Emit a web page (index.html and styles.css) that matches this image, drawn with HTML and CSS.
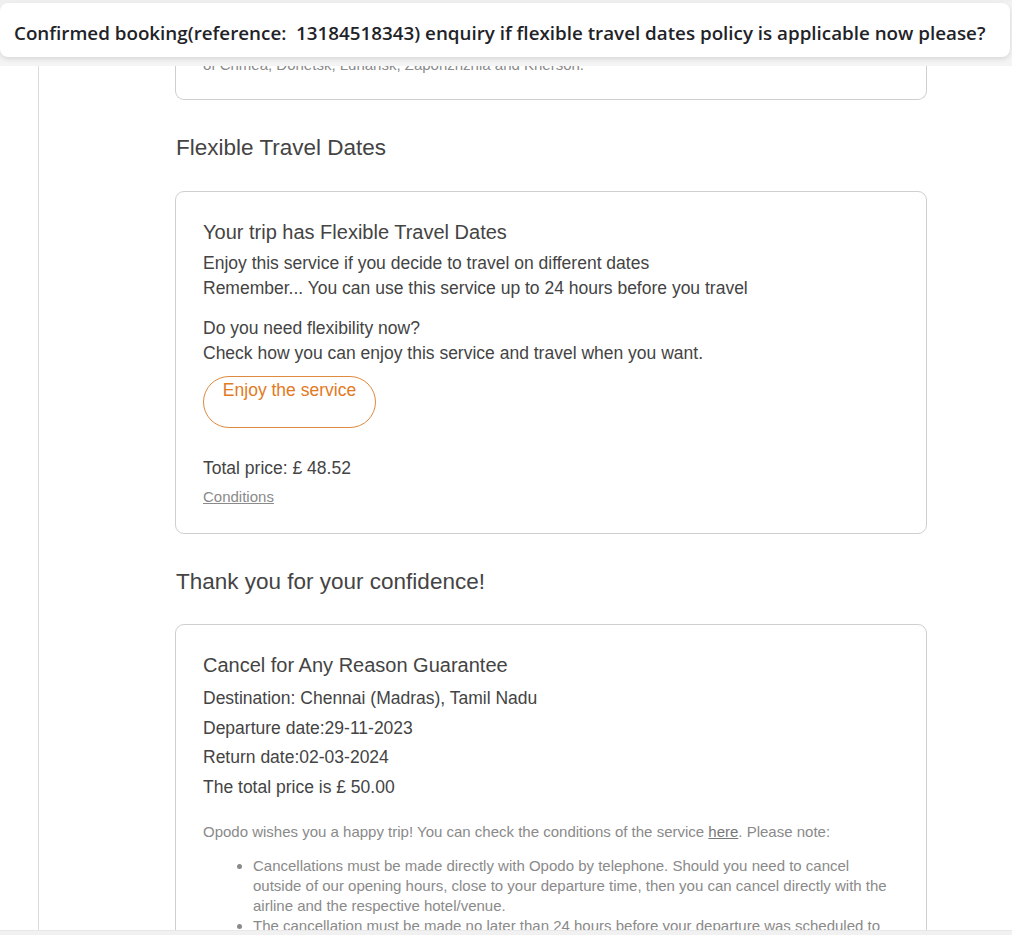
FILE: index.html
```html
<!DOCTYPE html>
<html lang="en">
<head>
<meta charset="utf-8">
<title>Flexible Travel Dates</title>
<link rel="stylesheet" href="styles.css">
</head>
<body>
<div class="topbar">
  <div class="question">Confirmed booking(reference:&nbsp; 13184518343) enquiry if flexible travel dates policy is applicable now please?</div>
</div>

<main class="page">
  <section class="card card-first">
    <p class="small-note">of Crimea, Donetsk, Luhansk, Zaporizhzhia and Kherson.</p>
  </section>

  <h2 class="section-title title-flex">Flexible Travel Dates</h2>
  <section class="card">
    <h3 class="card-title">Your trip has Flexible Travel Dates</h3>
    <p class="body-text">Enjoy this service if you decide to travel on different dates<br>Remember... You can use this service up to 24 hours before you travel</p>
    <p class="body-text gap">Do you need flexibility now?<br>Check how you can enjoy this service and travel when you want.</p>
    <a class="pill" href="#">Enjoy the service</a>
    <p class="body-text price">Total price: £ 48.52</p>
    <a class="conditions" href="#">Conditions</a>
  </section>

  <h2 class="section-title title-thanks">Thank you for your confidence!</h2>
  <section class="card card-last">
    <h3 class="card-title">Cancel for Any Reason Guarantee</h3>
    <ul class="facts">
      <li>Destination: Chennai (Madras), Tamil Nadu</li>
      <li>Departure date:29-11-2023</li>
      <li>Return date:02-03-2024</li>
      <li>The total price is £ 50.00</li>
    </ul>
    <p class="note">Opodo wishes you a happy trip! You can check the conditions of the service <a href="#">here</a>. Please note:</p>
    <ul class="bullets">
      <li>Cancellations must be made directly with Opodo by telephone. Should you need to cancel outside of our opening hours, close to your departure time, then you can cancel directly with the airline and the respective hotel/venue.</li>
      <li>The cancellation must be made no later than 24 hours before your departure was scheduled to take place.</li>
      <li>Refunds will be processed within 14 days of the cancellation.</li>
    </ul>
  </section>
</main>

<div class="bottombar"></div>
</body>
</html>
```

FILE: styles.css
```css
html, body {
  margin: 0;
  padding: 0;
  background: #ffffff;
  overflow: hidden;
}

body {
  font-family: "Liberation Sans", Arial, sans-serif;
  color: #4a4a4a;
}

.topbar {
  position: fixed;
  top: 0;
  left: 0;
  right: 0;
  height: 66px;
  background: linear-gradient(#eeeeee 0, #f2f2f2 3px, #f4f4f4 100%);
  z-index: 10;
}

.question {
  box-sizing: border-box;
  margin: 3px 2px 0 0;
  height: 54px;
  background: #ffffff;
  border-radius: 8px;
  box-shadow: 0 2px 5px rgba(0, 0, 0, 0.12);
  display: flex;
  align-items: center;
  padding: 5px 0 0 14px;
  font-family: "Open Sans", "Noto Sans", sans-serif;
  font-weight: 600;
  font-size: 18.8px;
  color: #1f2328;
  white-space: nowrap;
}

.bottombar {
  position: fixed;
  left: 0;
  right: 0;
  bottom: 0;
  height: 4px;
  background: #f1f1f1;
  border-top: 1px solid #e8e8e8;
  z-index: 10;
}

.page {
  margin-left: 38px;
  border-left: 1px solid #dcdcdc;
  padding-left: 136px;
  width: 752px;
  min-height: 1200px;
}

.card {
  border: 1px solid #cfcfcf;
  border-radius: 9px;
  padding: 28px 27px 26px;
  background: #ffffff;
}

.card-first {
  margin-top: -2px;
  border-top: none;
  border-radius: 0 0 9px 9px;
  padding: 57px 27px 24px;
}

.small-note {
  margin: 0;
  font-size: 15px;
  line-height: 20px;
  color: #8a8a8a;
}

.section-title {
  margin: 0;
  font-weight: normal;
  font-size: 22.5px;
  line-height: 28px;
  color: #444444;
}

.title-flex {
  margin: 34px 0 29px 1px;
}

.title-thanks {
  margin: 34px 0 28px 1px;
}

.card-title {
  margin: 0 0 7px;
  font-weight: normal;
  font-size: 20px;
  line-height: 24px;
  color: #444444;
}

.body-text {
  margin: 0;
  font-size: 17.5px;
  line-height: 25px;
  color: #444444;
}

.body-text.gap {
  margin-top: 15px;
}

.pill {
  display: block;
  box-sizing: border-box;
  margin-top: 10px;
  width: 173px;
  height: 52px;
  padding-top: 2px;
  border: 1px solid #df8a3e;
  border-radius: 26px;
  background: #ffffff;
  color: #e27a1e;
  font-size: 17.5px;
  line-height: 22px;
  text-align: center;
  text-decoration: none;
}

.price {
  margin-top: 28px;
}

.conditions {
  display: block;
  margin-top: 6px;
  font-size: 15px;
  line-height: 20px;
  color: #8a8a8a;
  text-decoration: underline;
  width: max-content;
}

.facts {
  list-style: none;
  margin: 5px 0 0;
  padding: 0;
  font-size: 17.5px;
  line-height: 29.7px;
  color: #444444;
}

.note {
  margin: 19px 0 0;
  font-size: 15px;
  line-height: 20px;
  color: #8a8a8a;
}

.note a {
  color: #777777;
  text-decoration: underline;
}

.bullets {
  margin: 14px 0 0;
  padding-left: 50px;
  padding-right: 8px;
  font-size: 15px;
  line-height: 20px;
  color: #8a8a8a;
}
```
